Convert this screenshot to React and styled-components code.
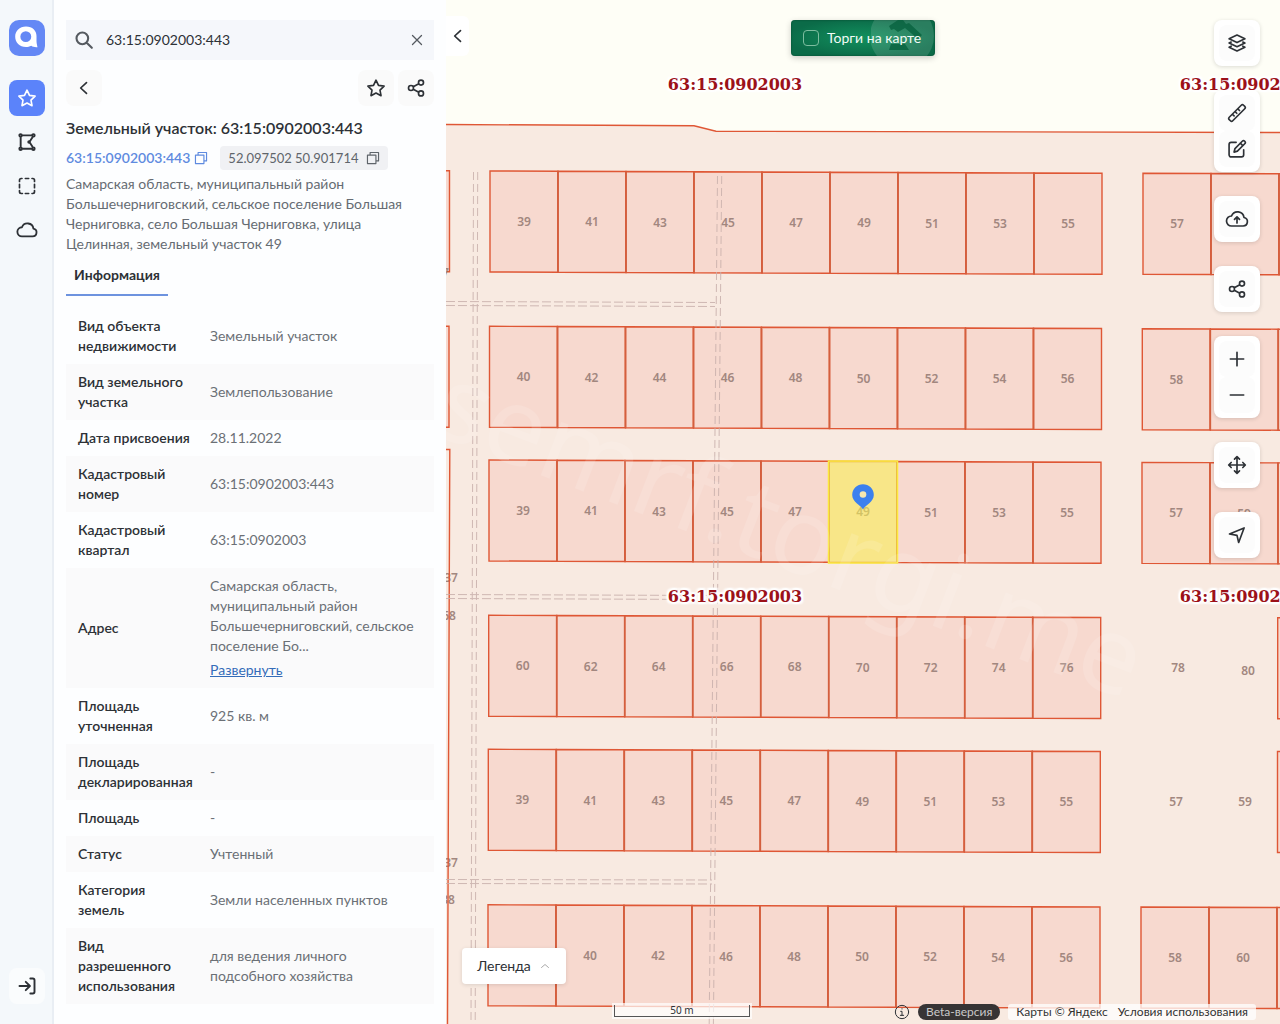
import React, { useState } from 'react';
import styled, { createGlobalStyle, css } from 'styled-components';

const GlobalStyle = createGlobalStyle`
    * {
        box-sizing: border-box;
    }

    body {
        margin: 0;
        font-family: Lato, 'Open Sans', 'Liberation Sans', sans-serif;
        font-size: 14px;
        line-height: 20px;
        color: #2d3136;
        background: #fdfeff;
    }

    button, input {
        font: inherit;
        color: inherit;
    }
`;

const Page = styled.div`
    display: flex;
    height: 100vh;
    overflow: hidden;
`;

const Sidebar = styled.nav`
    display: flex;
    flex-direction: column;
    align-items: center;
    flex: none;
    gap: 8px;
    width: 54px;
    padding: 20px 7px 20px 9px;
    background: #f4f8fb;
    border-right: 2px solid #e9eef4;

    > :last-child {
        margin-top: auto;
    }
`;

const Logo = styled.a`
    display: block;
    width: 36px;
    height: 36px;
    margin-bottom: 16px;
    border-radius: 10px;
    background: #6488f5;
`;

const IconButton = styled.button`
    display: flex;
    align-items: center;
    justify-content: center;
    flex: none;
    width: 36px;
    height: 36px;
    padding: 0;
    border: 0;
    border-radius: 8px;
    background: ${({ $tone }) => $tone || 'transparent'};
    cursor: pointer;

    ${({ $active }) => $active && css`
        color: #fff;
        background: #5b83fa;
    `}
`;

const Panel = styled.aside`
    flex: none;
    width: 392px;
    padding: 20px 12px;
    overflow: hidden;
`;

const SearchBox = styled.form`
    display: flex;
    align-items: center;
    height: 40px;
    padding: 0 8px;
    color: #555a60;
    background: #f5f7fb;

    input {
        flex: 1;
        min-width: 0;
        padding: 0 12px;
        border: 0;
        outline: 0;
        color: #2d3136;
        background: none;
    }

    button {
        display: flex;
        padding: 0;
        border: 0;
        background: none;
    }
`;

const Actions = styled.div`
    display: flex;
    gap: 4px;
    margin: 10px 0 12px;

    > :first-child {
        margin-right: auto;
    }
`;

const Title = styled.h1`
    margin: 0;
    font-size: 16px;
    line-height: 20px;
    font-weight: 600;
`;

const Codes = styled.div`
    display: flex;
    align-items: center;
    gap: 12px;
    margin: 8px 0 4px;
`;

const Code = styled.span`
    display: flex;
    align-items: center;
    gap: 4px;
    height: 24px;
    color: #5f8be0;
    font-weight: 600;

    a {
        color: inherit;
        text-decoration: none;
    }

    button {
        display: flex;
        padding: 0;
        border: 0;
        background: none;
    }

    ${({ $plain }) => $plain && css`
        gap: 8px;
        padding: 0 8px;
        border-radius: 4px;
        color: #5f656b;
        background: #f0f1f4;
        font-size: 13px;
        font-weight: 400;
    `}
`;

const Address = styled.p`
    margin: 0;
    padding-right: 12px;
    color: #666c73;
`;

const Tabs = styled.div`
    display: flex;
    margin: 2px 0 12px;
`;

const Tab = styled.button`
    height: 40px;
    padding: 0 8px;
    border: 0;
    border-bottom: 2px solid #6d93df;
    background: none;
    font-weight: 700;
`;

const InfoTable = styled.table`
    width: 100%;
    border-collapse: collapse;
    table-layout: fixed;

    th, td {
        padding: 8px 12px;
        text-align: left;
        vertical-align: middle;
    }

    th {
        width: 132px;
        padding-right: 4px;
        font-weight: 600;
    }

    td {
        color: #6b7076;
    }

    tr:nth-child(even) {
        background: #fafafb;
    }
`;

const ExpandLink = styled.a`
    display: block;
    width: fit-content;
    margin-top: 4px;
    color: #346cb9;
`;

const MapArea = styled.main`
    position: relative;
    flex: 1;
    min-width: 0;
    background: #fefef6;
    overflow: hidden;
`;

const MapSvg = styled.svg`
    display: block;
    width: 100%;
    height: 100%;

    .number {
        font: 600 12px 'Noto Sans', sans-serif;
        fill: #a2877f;
        text-anchor: middle;
    }
`;

const QuarterLabel = styled.span`
    position: absolute;
    z-index: 2;
    padding: 0 2px;
    font: bold 16px/20px 'DejaVu Serif', serif;
    color: #9c1119;
    white-space: nowrap;
    transform: translate(-50%, -50%);
    text-shadow: -2px 0 1px #fff, 2px 0 1px #fff, 0 -2px 1px #fff, 0 2px 1px #fff,
        -2px -2px 2px #fff, 2px -2px 2px #fff, -2px 2px 2px #fff, 2px 2px 2px #fff;
`;

const CollapseButton = styled.button`
    position: absolute;
    top: 16px;
    left: 0;
    display: flex;
    align-items: center;
    justify-content: center;
    width: 23px;
    height: 40px;
    padding: 0;
    border: 0;
    border-radius: 0 6px 6px 0;
    background: #fff;
`;

const AuctionToggle = styled.label`
    position: absolute;
    top: 20px;
    left: 50%;
    display: flex;
    align-items: center;
    gap: 8px;
    width: 144px;
    height: 36px;
    padding: 0 12px;
    border-radius: 4px;
    overflow: hidden;
    color: #f2fbf6;
    white-space: nowrap;
    background: radial-gradient(ellipse at center, #12905e 0%, #0b6b48 75%);
    box-shadow: 0 2px 6px rgba(0, 0, 0, .2), inset 0 0 2px #05452d;
    transform: translateX(-50%);

    input {
        appearance: none;
        position: relative;
        flex: none;
        width: 16px;
        height: 16px;
        margin: 0;
        border: 1px solid #7dbd9f;
        border-radius: 4px;
    }

    span {
        position: relative;
    }

    svg {
        position: absolute;
        top: 0;
        right: 0;
    }
`;

const Toolbar = styled.div`
    position: absolute;
    top: 20px;
    right: 20px;
    display: flex;
    flex-direction: column;
    gap: 24px;
`;

const ToolGroup = styled.div`
    display: flex;
    flex-direction: column;
    padding: 5px;
    border-radius: 8px;
    background: #fff;
    box-shadow: 0 1px 4px rgba(0, 0, 0, .14);
`;

const LegendButton = styled.button`
    position: absolute;
    left: 16px;
    bottom: 40px;
    display: flex;
    align-items: center;
    justify-content: center;
    gap: 8px;
    width: 104px;
    height: 36px;
    padding: 0;
    border: 0;
    border-radius: 4px;
    background: #fff;
    box-shadow: 0 1px 4px rgba(0, 0, 0, .12);

    svg {
        color: #aaa;
    }
`;

const ScaleBar = styled.div`
    position: absolute;
    left: 166px;
    bottom: 5px;
    padding: 2px;
    background: rgba(255, 255, 255, .7);

    div {
        width: 136px;
        height: 12px;
        border: 1px solid #555;
        border-top: 0;
        font: 10px/11px 'Noto Sans', sans-serif;
        text-align: center;
    }
`;

const Copyrights = styled.footer`
    position: absolute;
    right: 24px;
    bottom: 4px;
    display: flex;
    align-items: center;
    gap: 8px;
    font-size: 12px;
    line-height: 16px;
`;

const Beta = styled.span`
    padding: 0 8px;
    border-radius: 8px;
    color: #c9c9c9;
    background: #373435;
`;

const CopyrightLinks = styled.span`
    display: flex;
    gap: 10px;
    padding: 0 8px;
    border-radius: 3px;
    background: rgba(255, 255, 255, .75);

    a {
        color: #333;
        text-decoration: none;
    }
`;

const ICONS = {
    star: 'M12 2.6l3 6.2 6.7.9-4.9 4.8 1.2 6.7-6-3.2-6 3.2 1.2-6.7-4.9-4.8 6.7-.9z',
    share: 'M9 12a3 3 0 1 1-6 0a3 3 0 1 1 6 0M21 5.5a3 3 0 1 1-6 0a3 3 0 1 1 6 0M21 18.5a3 3 0 1 1-6 0a3 3 0 1 1 6 0M8.7 10.6l6.6-3.6M8.7 13.4l6.6 3.6',
    back: 'M15 5.5L8 12l7 6.5',
    close: 'M6 6l12 12M18 6L6 18',
    search: 'M17 10a7 7 0 1 1-14 0a7 7 0 1 1 14 0M15.2 15.2L21.4 21.4',
    polygon: 'M6 4h12M4.4 6v12M6 20h12M19 5.8L15.5 11M15.5 13l3.5 5.2M5.8 4a1.5 1.5 0 1 1-3 0a1.5 1.5 0 1 1 3 0M21.2 4a1.5 1.5 0 1 1-3 0a1.5 1.5 0 1 1 3 0M5.8 20a1.5 1.5 0 1 1-3 0a1.5 1.5 0 1 1 3 0M21.2 20a1.5 1.5 0 1 1-3 0a1.5 1.5 0 1 1 3 0M15.5 12a1 1 0 1 1-2 0a1 1 0 1 1 2 0',
    select: 'M6 3H5a2 2 0 0 0-2 2v1.5M10 3h4M18 3h1a2 2 0 0 1 2 2v1.5M21 10v4M21 17.5v1.5a2 2 0 0 1-2 2h-1M14 21h-4M6.5 21H5a2 2 0 0 1-2-2v-1.5M3 14v-4',
    cloud: 'M7 19h11a4.3 4.3 0 0 0 1-8.5a6.5 6.5 0 0 0-12.5-1.5A5 5 0 0 0 6.5 19z',
    upload: 'M6.5 19h11.5a4.3 4.3 0 0 0 1-8.5a6.5 6.5 0 0 0-12.5-1.5A5 5 0 0 0 6.5 19zM12 16V10M9.5 12.3L12 9.8l2.5 2.5',
    login: 'M3 12h12M10.5 7l5 5-5 5M16 3h3a2 2 0 0 1 2 2v14a2 2 0 0 1-2 2h-3',
    layers: 'M12 2.5l9.5 4.5-9.5 4.5L2.5 7zM5 10.8l-2.5 1.2 9.5 4.5 9.5-4.5-2.5-1.2M5 15.8L2.5 17l9.5 4.5 9.5-4.5-2.5-1.2',
    ruler: 'M2.7 17.1L17.1 2.7a2 2 0 0 1 2.8 0l1.4 1.4a2 2 0 0 1 0 2.8L6.9 21.3a2 2 0 0 1-2.8 0l-1.4-1.4a2 2 0 0 1 0-2.8zM6.5 13.5l2 2M9.7 10.3l2 2M13 7l2 2',
    edit: 'M11 4H5a2.5 2.5 0 0 0-2.5 2.5v12.5A2.5 2.5 0 0 0 5 21.5h12.5a2.5 2.5 0 0 0 2.5-2.5v-6M18.3 2.7a2 2 0 0 1 3 3L12.5 14.5l-4 1.2 1.1-4.2zM16 5l3 3',
    plus: 'M12 4v16M4 12h16',
    minus: 'M4 12h16',
    move: 'M12 2.5v19M2.5 12h19M9 5l3-3 3 3M9 19l3 3 3-3M5 9l-3 3 3 3M19 9l3 3-3 3',
    locate: 'M3 10.8L20.5 3.5 14 21l-2-8.5z',
    up: 'M5 15l7-6 7 6',
    copy: 'M2.5 7h14.5v14.5H2.5zM7 7V2.5h14.5V17H17',
    info: 'M22 12a10 10 0 1 1-20 0a10 10 0 1 1 20 0M12 7v.5M10 11h2v6M9.5 17h5',
};

const Icon = ({ name, size = 20, weight = 2 }) => (
    <svg
        width={size}
        height={size}
        viewBox='0 0 24 24'
        fill='none'
        stroke='currentColor'
        strokeWidth={weight}
        strokeLinecap='round'
        strokeLinejoin='round'
        aria-hidden='true'
    >
        <path d={ICONS[name]}/>
    </svg>
);

const ROWS = [
    ['Вид объекта недвижимости', 'Земельный участок'],
    ['Вид земельного участка', 'Землепользование'],
    ['Дата присвоения', '28.11.2022'],
    ['Кадастровый номер', '63:15:0902003:443'],
    ['Кадастровый квартал', '63:15:0902003'],
    ['Адрес', 'Самарская область, муниципальный район Большечерниговский, сельское поселение Бо...', true],
    ['Площадь уточненная', '925 кв. м'],
    ['Площадь декларированная', '-'],
    ['Площадь', '-'],
    ['Статус', 'Учтенный'],
    ['Категория земель', 'Земли населенных пунктов'],
    ['Вид разрешенного использования', 'для ведения личного подсобного хозяйства'],
];

const TOOLS = [
    [['layers', 'Слои']],
    [['ruler', 'Линейка'], ['edit', 'Рисование']],
    [['upload', 'Загрузить', 24, 1.7]],
    [['share', 'Поделиться']],
    [['plus', 'Приблизить'], ['minus', 'Отдалить']],
    [['move', 'Переместить']],
    [['locate', 'Моё местоположение']],
];

const LOT_WIDTH = 68;
const LOT_HEIGHT = 101;

// x and y are the top left corner of a block, each lot is a bit lower than the previous one
const BLOCKS = [
    { x: 44, y: 171, lots: [39, 41, 43, 45, 47, 49, 51, 53, 55] },
    { x: 43.5, y: 326.3, lots: [40, 42, 44, 46, 48, 50, 52, 54, 56] },
    { x: 43, y: 460, lots: [39, 41, 43, 45, 47, 49, 51, 53, 55] },
    { x: 42.7, y: 615.3, lots: [60, 62, 64, 66, 68, 70, 72, 74, 76] },
    { x: 42.3, y: 749.3, lots: [39, 41, 43, 45, 47, 49, 51, 53, 55] },
    { x: 42, y: 904.8, lots: ['', 40, 42, 46, 48, 50, 52, 54, 56] },
    { x: 697, y: 173.3, lots: [57, '', ''] },
    { x: 696.3, y: 328.7, lots: [58, '', ''] },
    { x: 696, y: 462.4, lots: [57, 59, ''] },
    { x: 831.7, y: 617.7, lots: [''] },
    { x: 831.5, y: 751.5, lots: [''] },
    { x: 695, y: 907, lots: [58, 60, ''] },
    { x: -64.5, y: 170.5, lots: [''] },
    { x: -65, y: 326, lots: [''] },
];

const LOOSE_NUMBERS = [
    [732, 672, 78],
    [802, 675, 80],
    [730, 806, 57],
    [799, 806, 59],
    [5, 582, 37],
    [3, 620, 68],
    [5, 867, 37],
    [2, 904, 38],
    [-4, 277, 37],
];

const TRACKS = [
    'M27.5 172L25 1024M31.7 172L29.2 1024',
    'M271.5 176L263.2 1024M275.7 176L267.4 1024',
];

const CROSS_TRACKS = [
    'M0 301.5L269 302.5M0 305.5L269 306.5',
    'M0 594.5L267 595.5M0 598.5L267 599.5',
    'M0 879.5L266 880M0 883.5L266 884',
];

const QUARTERS = [[289, 85], [801, 85], [289, 597], [801, 597]];

const Block = ({ x, y, lots }) => (
    <g>
        {lots.map((number, i) => {
            const left = x + i * LOT_WIDTH;
            const top = y + i * 0.25;
            return (
                <g key={i}>
                    <path
                        d={`M${left} ${top}l${LOT_WIDTH} .25v${LOT_HEIGHT}l-${LOT_WIDTH}-.25z`}
                        fill='#f7d9cf'
                        stroke='#df5735'
                        strokeWidth='1.4'
                    />
                    {i > 0 && <path d={`M${left} ${top}v${LOT_HEIGHT}`} stroke='#d35f3e' strokeWidth='1.7'/>}
                    <text x={left + 34} y={top + 55} className='number'>{number}</text>
                </g>
            );
        })}
    </g>
);

const CadastralMap = () => (
    <MapSvg role='img' aria-label='Кадастровая карта'>
        <path d='M0 124.5L248 125.8 270 131.3 4000 139V4000H0z' fill='#f8eae1'/>
        <path d='M0 124.5L248 125.8 270 131.3 4000 139' fill='none' stroke='#df5735' strokeWidth='1.4'/>
        {BLOCKS.map((block) => <Block key={`${block.x}-${block.y}`} {...block}/>)}
        {LOOSE_NUMBERS.map(([x, y, number]) => (
            <text key={`${x}-${y}`} x={x} y={y} className='number'>{number}</text>
        ))}
        <path d='M0 449.5h3.8L1.5 1024' fill='none' stroke='#df5735' strokeWidth='1.4'/>
        <g fill='none' stroke='#c9b0ac' strokeWidth='1' opacity='.85'>
            {TRACKS.map((d) => <path key={d} d={d} strokeDasharray='8 4'/>)}
            {CROSS_TRACKS.map((d) => <path key={d} d={d} strokeDasharray='9 3'/>)}
        </g>
        <rect x='382.5' y='461' width='69' height='102' fill='#f7f050' fillOpacity='.56' stroke='#fbe93f' strokeWidth='1.5'/>
        <path d='M417 509.5c-2.5-4.5-10.8-7.5-10.8-14.5a10.8 10.8 0 0 1 21.6 0c0 7-8.3 10-10.8 14.5z' fill='#3c80ee'/>
        <circle cx='417' cy='494.5' r='3.3' fill='#f7e7b0'/>
        <text
            transform='translate(-18 432) rotate(21)'
            fill='#fff'
            fillOpacity='.13'
            fontFamily='Noto Sans, sans-serif'
            fontSize='107'
        >
            semrf.torgi.me
        </text>
    </MapSvg>
);

const App = () => {
    const [query, setQuery] = useState('63:15:0902003:443');

    return (
        <>
            <GlobalStyle/>
            <Page>
                <Sidebar>
                    <Logo href='#' aria-label='На главную'>
                        <svg width='36' height='36' viewBox='0 0 36 36' fill='#fff'>
                            <path fillRule='evenodd' d='M17 6.5c6.5 0 10.5 4.2 10.5 9.5v4.5c0 2.5.5 4.5 1 6.7-2.5.2-4.7-.2-6.2-1.4C20.5 26.8 18.8 27 17 27 10.5 27 6.2 22.5 6.2 16.7S10.5 6.5 17 6.5zm-.2 4.7a5.4 5.4 0 1 0 0 10.9 5.4 5.4 0 0 0 0-10.9z'/>
                        </svg>
                    </Logo>
                    <IconButton $active aria-label='Избранное'><Icon name='star'/></IconButton>
                    <IconButton aria-label='Многоугольник'><Icon name='polygon' weight={2.3}/></IconButton>
                    <IconButton aria-label='Выделение'><Icon name='select'/></IconButton>
                    <IconButton aria-label='Облако'><Icon name='cloud' size={22}/></IconButton>
                    <IconButton $tone='#fafcfd' aria-label='Войти'><Icon name='login' weight={2.3}/></IconButton>
                </Sidebar>
                <Panel>
                    <SearchBox onSubmit={(e) => e.preventDefault()}>
                        <Icon name='search' weight={2.5}/>
                        <input
                            aria-label='Поиск'
                            value={query}
                            onChange={(e) => setQuery(e.target.value)}
                        />
                        <button type='button' aria-label='Очистить' onClick={() => setQuery('')}>
                            <Icon name='close' size={18} weight={1.7}/>
                        </button>
                    </SearchBox>
                    <Actions>
                        <IconButton $tone='#fafafa' aria-label='Назад'><Icon name='back'/></IconButton>
                        <IconButton $tone='#fafafa' aria-label='В избранное'><Icon name='star'/></IconButton>
                        <IconButton $tone='#fafafa' aria-label='Поделиться'><Icon name='share'/></IconButton>
                    </Actions>
                    <Title>Земельный участок: 63:15:0902003:443</Title>
                    <Codes>
                        <Code>
                            <a href='#'>63:15:0902003:443</a>
                            <button aria-label='Копировать номер'><Icon name='copy' size={14}/></button>
                        </Code>
                        <Code $plain>
                            52.097502 50.901714
                            <button aria-label='Копировать координаты'><Icon name='copy' size={14}/></button>
                        </Code>
                    </Codes>
                    <Address>
                        Самарская область, муниципальный район Большечерниговский, сельское поселение
                        Большая Черниговка, село Большая Черниговка, улица Целинная, земельный участок 49
                    </Address>
                    <Tabs role='tablist'>
                        <Tab role='tab' aria-selected='true'>Информация</Tab>
                    </Tabs>
                    <InfoTable>
                        <tbody>
                            {ROWS.map(([label, value, expandable]) => (
                                <tr key={label}>
                                    <th scope='row'>{label}</th>
                                    <td>
                                        {value}
                                        {expandable && <ExpandLink href='#'>Развернуть</ExpandLink>}
                                    </td>
                                </tr>
                            ))}
                        </tbody>
                    </InfoTable>
                </Panel>
                <MapArea>
                    <CadastralMap/>
                    {QUARTERS.map(([x, y]) => (
                        <QuarterLabel key={`${x}-${y}`} style={{ left: x, top: y }}>63:15:0902003</QuarterLabel>
                    ))}
                    <CollapseButton aria-label='Свернуть панель'><Icon name='back'/></CollapseButton>
                    <AuctionToggle>
                        <svg width='64' height='36' viewBox='0 0 64 36' aria-hidden='true'>
                            <circle cx='31' cy='16' r='32' fill='#fff' fillOpacity='.13'/>
                            <path d='M18 6l9-6h5l3 4 3-1 13 12-4 4-13-11-7 4-4-3-3 1zM20 24h14l4 6H18z' fill='#07613f' fillOpacity='.8'/>
                        </svg>
                        <input type='checkbox'/>
                        <span>Торги на карте</span>
                    </AuctionToggle>
                    <Toolbar>
                        {TOOLS.map((group) => (
                            <ToolGroup key={group[0][0]}>
                                {group.map(([name, label, size, weight]) => (
                                    <IconButton key={name} $tone='#fcfcfc' aria-label={label}>
                                        <Icon name={name} size={size} weight={weight}/>
                                    </IconButton>
                                ))}
                            </ToolGroup>
                        ))}
                    </Toolbar>
                    <LegendButton>
                        Легенда
                        <Icon name='up' size={12}/>
                    </LegendButton>
                    <ScaleBar><div>50 m</div></ScaleBar>
                    <Copyrights>
                        <Icon name='info' size={16} weight={1.5}/>
                        <Beta>Beta-версия</Beta>
                        <CopyrightLinks>
                            <a href='#'>Карты © Яндекс</a>
                            <a href='#'>Условия использования</a>
                        </CopyrightLinks>
                    </Copyrights>
                </MapArea>
            </Page>
        </>
    );
};

export default App;
